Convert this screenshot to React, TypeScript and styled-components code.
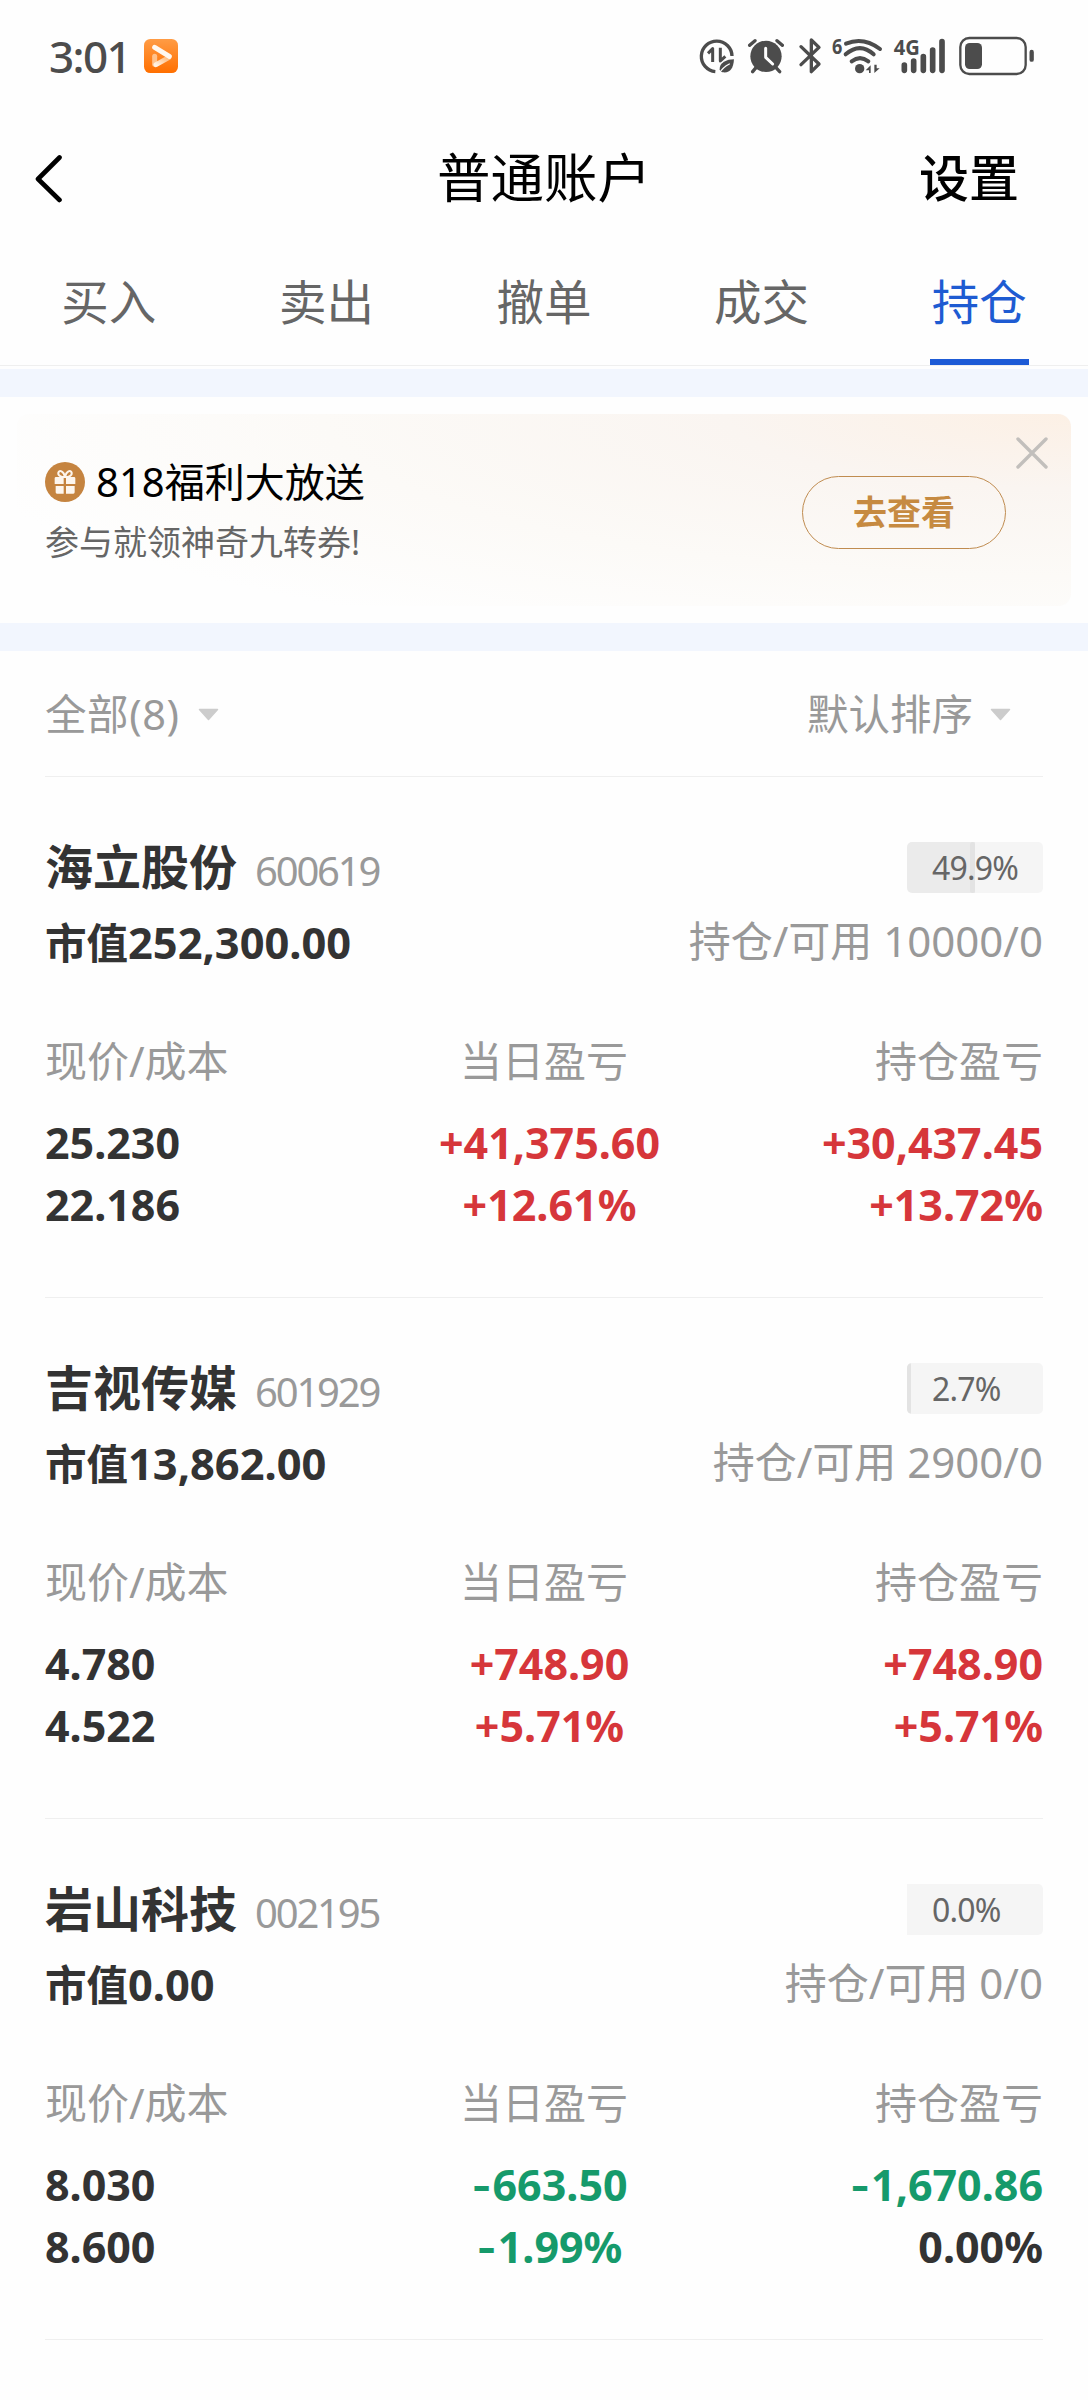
import React from 'react';
import styled, { createGlobalStyle } from 'styled-components';

const GlobalStyle = createGlobalStyle`
  * { box-sizing: border-box; }
  body {
    margin: 0;
    background: #fefefe;
    font-family: "Noto Sans", "Noto Sans CJK SC", sans-serif;
    color: #333;
  }
`;

const Screen = styled.div`
  width: 1088px;
  height: 2400px;
  overflow: hidden;
  background: #fefefe;
`;

/* ---------- status bar ---------- */

const StatusBar = styled.div`
  display: flex;
  align-items: center;
  height: 112px;
  padding: 0 53px 0 49px;
`;

const Clock = styled.span`
  width: 95px;
  font-size: 44px;
  line-height: 60px;
  font-weight: 500;
  letter-spacing: -1.6px;
  color: #4c4c4c;
  white-space: nowrap;
`;

const StatusIcons = styled.div`
  display: flex;
  margin-left: auto;
  color: #4c4c4c;
`;

const StatusGlyph = styled.svg`
  display: block;
  height: 40px;
  overflow: visible;
`;

/* ---------- header ---------- */

const Header = styled.header`
  display: grid;
  grid-template-columns: 1fr auto 1fr;
  align-items: center;
  height: 130px;
  padding: 1px 69px 0 33px;
  color: #000;
`;

const BackIcon = styled.svg`
  display: block;
  width: 32px;
  height: 50px;
`;

const Title = styled.h1`
  margin: 0 0 0 36px;
  font-size: 53.5px;
  line-height: 80px;
  font-weight: 400;
`;

const Settings = styled.span`
  justify-self: end;
  font-size: 50px;
  line-height: 80px;
  font-weight: 500;
`;

const Tabs = styled.nav`
  display: flex;
  height: 124px;
  border-bottom: 1px solid #efefef;
`;

const Tab = styled.div<{ $active?: boolean }>`
  flex: 1;
  display: flex;
  flex-direction: column;
  align-items: center;
  justify-content: space-between;
  padding-top: 25px;
  font-size: 47.5px;
  line-height: 70px;
  color: ${(p) => (p.$active ? '#1e5bd2' : '#666')};

  &::after {
    content: '';
    width: 99px;
    height: 6px;
    background: ${(p) => (p.$active ? '#1e5bd6' : 'transparent')};
  }
`;

const Band = styled.div<{ $top?: number }>`
  height: 28px;
  margin-top: ${(p) => p.$top ?? 0}px;
  background: #f2f6fe;
`;

/* ---------- promotion ---------- */

const Promo = styled.section`
  position: relative;
  display: flex;
  align-items: center;
  justify-content: space-between;
  height: 192px;
  margin: 17px;
  padding: 4px 65px 0 28px;
  border-radius: 13px;
  background:
    radial-gradient(ellipse 1150px 250px at 100% 0%, #fcf0e5 0%, #faf5f1 30%, #fcfaf7 65%, rgba(254, 254, 254, 0) 100%),
    #fefefe;
`;

const PromoText = styled.div`
  display: flex;
  flex-direction: column;
`;

const PromoTitle = styled.div`
  display: flex;
  align-items: center;
  gap: 11px;
  font-size: 40px;
  line-height: 60px;
  color: #000;
`;

const PromoSub = styled.div`
  font-size: 34px;
  line-height: 60px;
  color: #666;
`;

const PromoButton = styled.div`
  width: 204px;
  height: 73px;
  border: 1px solid #c08c50;
  border-radius: 37px;
  text-align: center;
  font-size: 34px;
  line-height: 71px;
  font-weight: 700;
  color: #c68a41;
`;

const CloseIcon = styled.svg`
  position: absolute;
  top: 21px;
  right: 21px;
  width: 36px;
  height: 36px;
`;

/* ---------- holdings ---------- */

const List = styled.main`
  padding: 0 45px;
`;

const Filters = styled.div`
  display: flex;
  justify-content: space-between;
  height: 126px;
  padding: 28px 32px 0 0;
  border-bottom: 1px solid #efefef;
`;

const Filter = styled.div<{ $gap: number; $spacing?: number }>`
  display: flex;
  align-items: center;
  gap: ${(p) => p.$gap}px;
  height: 70px;
  font-size: 41.5px;
  line-height: 70px;
  letter-spacing: ${(p) => p.$spacing ?? 0}px;
  color: #999;
`;

const Caret = styled.svg`
  width: 21px;
  height: 13px;
`;

const Card = styled.article`
  height: 521px;
  padding-top: 54px;
  border-bottom: 1px solid #efefef;
`;

const Line = styled.div<{ $h: number }>`
  display: flex;
  align-items: center;
  justify-content: space-between;
  height: ${(p) => p.$h}px;
  line-height: ${(p) => p.$h}px;
`;

const NameGroup = styled.div`
  display: flex;
  align-items: center;
  gap: 18px;
`;

const Name = styled.span`
  font-size: 48px;
  font-weight: 700;
`;

const Code = styled.span`
  margin-top: 8px;
  font-size: 40px;
  letter-spacing: -2.2px;
  color: #999;
`;

const Share = styled.div<{ $fill: number }>`
  position: relative;
  width: 136px;
  height: 51px;
  padding-left: 25px;
  border-radius: ${(p) => (p.$fill > 0 ? '5px' : '0 5px 5px 0')};
  overflow: hidden;
  background: linear-gradient(to right, #ebebeb ${(p) => p.$fill}px, #f5f5f5 ${(p) => p.$fill}px);
  font-size: 32px;
  line-height: 52px;
  letter-spacing: -0.8px;
  color: #666;
`;

const ShareEdge = styled.i<{ $at: number }>`
  position: absolute;
  top: 0;
  left: ${(p) => Math.max(0, p.$at - 5)}px;
  width: ${(p) => Math.min(5, p.$at)}px;
  height: 51px;
  border-radius: 3px;
  background: #e3e3e3;
`;

const ShareText = styled.span`
  position: relative;
`;

const MarketValue = styled.div`
  display: flex;
  font-size: 41.5px;
  font-weight: 700;
`;

const Amount = styled.span`
  font-size: 43.4px;
`;

const Quantity = styled.div`
  margin-bottom: 4px;
  font-size: 42px;
  color: #999;
`;

const Stats = styled.div`
  display: grid;
  grid-template-columns: 1fr 1fr 1fr;
  margin-top: 48px;
`;

const Stat = styled.div<{ $align: string; $shift?: number }>`
  text-align: ${(p) => p.$align};
  > p { padding-left: ${(p) => p.$shift ?? 0}px; }
`;

const Label = styled.div`
  height: 81px;
  font-size: 42px;
  line-height: 60px;
  color: #999;
`;

const Value = styled.p<{ $tone: Tone }>`
  margin: 0;
  font-size: 43px;
  line-height: 62px;
  font-weight: 700;
  color: ${(p) => ({ up: '#d6363a', down: '#169a6b', flat: '#333' })[p.$tone]};
`;

const Minus = styled.span`
  font-family: Inter, "Noto Sans", sans-serif;
  font-feature-settings: "calt" 0;
  letter-spacing: 1px;
  line-height: 1;
`;

type Tone = 'up' | 'down' | 'flat';

interface Holding {
  name: string;
  code: string;
  share: string;
  fill: number;
  market: string;
  quantity: string;
  prices: [string, string];
  today: [string, string];
  todayTone: Tone;
  total: [string, string];
  totalTones: [Tone, Tone];
}

const holdings: Holding[] = [
  {
    name: '海立股份', code: '600619', share: '49.9%', fill: 68,
    market: '252,300.00', quantity: '10000/0', prices: ['25.230', '22.186'],
    today: ['+41,375.60', '+12.61%'], todayTone: 'up',
    total: ['+30,437.45', '+13.72%'], totalTones: ['up', 'up'],
  },
  {
    name: '吉视传媒', code: '601929', share: '2.7%', fill: 4,
    market: '13,862.00', quantity: '2900/0', prices: ['4.780', '4.522'],
    today: ['+748.90', '+5.71%'], todayTone: 'up',
    total: ['+748.90', '+5.71%'], totalTones: ['up', 'up'],
  },
  {
    name: '岩山科技', code: '002195', share: '0.0%', fill: 0,
    market: '0.00', quantity: '0/0', prices: ['8.030', '8.600'],
    today: ['-663.50', '-1.99%'], todayTone: 'down',
    total: ['-1,670.86', '0.00%'], totalTones: ['down', 'flat'],
  },
];

const tabs = ['买入', '卖出', '撤单', '成交', '持仓'];

function AppBadge() {
  return (
    <svg width="34" height="34" viewBox="0 0 102 102">
      <defs>
        <linearGradient id="badge" x1="0" y1="0" x2="0" y2="1">
          <stop offset="0" stopColor="#ff9c45" />
          <stop offset="1" stopColor="#ff6f00" />
        </linearGradient>
        <linearGradient id="fold" x1="0" y1="1" x2="1" y2="0">
          <stop offset="0" stopColor="#fff2e4" />
          <stop offset="1" stopColor="#ffb877" />
        </linearGradient>
      </defs>
      <rect width="102" height="102" rx="19" fill="url(#badge)" />
      <path d="M32 52v24" stroke="#ffc28c" strokeWidth="15" strokeLinecap="round" />
      <path d="M36 77L74 56" stroke="url(#fold)" strokeWidth="15" strokeLinecap="round" />
      <path d="M32 25L76 52" stroke="#fff8f0" strokeWidth="15" strokeLinecap="round" />
    </svg>
  );
}

function StatusIconRow() {
  const stroke = { fill: 'none', stroke: 'currentColor', strokeLinecap: 'round' as const, strokeLinejoin: 'round' as const };
  return (
    <StatusIcons>
      <StatusGlyph viewBox="54 48 130 120">
        <path d="M106 155A46 46 0 1 1 156 108" {...stroke} strokeWidth="10" strokeLinecap="butt" />
        <path d="M84 100L98 86V126" {...stroke} strokeWidth="9" strokeLinecap="butt" />
        <path d="M121 83V123L136 109" {...stroke} strokeWidth="9" strokeLinecap="butt" />
        <path d="M162 118C140 118 118 128 119 148C120 154 124 156 128 157C150 160 160 146 162 118Z" fill="currentColor" />
        <path d="M118 160C126 146 136 138 148 132" {...stroke} stroke="#fefefe" strokeWidth="4" />
      </StatusGlyph>
      <StatusGlyph viewBox="184 48 152 120">
        <circle cx="259" cy="109" r="47" fill="currentColor" />
        <path d="M210 76L226 62M308 76L292 62" {...stroke} strokeWidth="10" />
        <path d="M229 143L219 155M289 143L300 155" {...stroke} strokeWidth="10" />
        <path d="M258 85V112L279 132" {...stroke} stroke="#fefefe" strokeWidth="9" />
      </StatusGlyph>
      <StatusGlyph viewBox="336 48 105 120">
        <path d="M363 80L417 132L394 155V60L417 82L363 134" {...stroke} strokeWidth="10" />
      </StatusGlyph>
      <StatusGlyph viewBox="441 48 183 120">
        <text x="456" y="101" fontSize="65" fontWeight="700" fill="currentColor" fontFamily="Open Sans, sans-serif" textLength="31" lengthAdjust="spacingAndGlyphs">6</text>
        <path d="M498 71Q550 49 600 87" {...stroke} strokeWidth="12" />
        <path d="M497 103Q540 66 581 103" {...stroke} strokeWidth="12" />
        <path d="M515 124Q540 105 565 124" {...stroke} strokeWidth="12" />
        <circle cx="539" cy="146" r="14" fill="currentColor" />
        <path d="M572 136V159H567V151H557ZM583 134V159L599 145H590V134Z" fill="currentColor" />
      </StatusGlyph>
      <StatusGlyph viewBox="624 48 192 120">
        <text x="641" y="105" fontSize="66" fontWeight="700" fill="currentColor" fontFamily="Open Sans, sans-serif" textLength="78" lengthAdjust="spacingAndGlyphs">4G</text>
        <path d="M673 135V151M701 123V151M730 110V151M758 90V151M786 65V151" {...stroke} strokeWidth="17" />
      </StatusGlyph>
      <StatusGlyph viewBox="816 48 249 120">
        <rect x="841" y="54" width="196" height="108" rx="27" {...stroke} strokeWidth="7" />
        <rect x="855" y="69" width="51" height="78" rx="14" fill="currentColor" />
        <path d="M1055 96V119" {...stroke} strokeWidth="13" />
      </StatusGlyph>
    </StatusIcons>
  );
}

function GiftIcon() {
  return (
    <svg width="40" height="40" viewBox="0 0 120 120">
      <circle cx="60" cy="60" r="60" fill="#c58440" />
      <path d="M60 45C50 46 38 41 40 32C43 23 56 27 60 45C64 27 77 23 80 32C82 41 70 46 60 45Z" fill="none" stroke="#fdf6ee" strokeWidth="6" />
      <path d="M29 49a4 4 0 0 1 4-4H56V66H29ZM63 45H87a4 4 0 0 1 4 4V66H63ZM32 72H56V95H36a4 4 0 0 1-4-4ZM63 72H89V91a4 4 0 0 1-4 4H63Z" fill="#fdf6ee" />
    </svg>
  );
}

function CaretDown() {
  return (
    <Caret viewBox="0 0 21 13">
      <path d="M1.5 1.5H19.5L10.5 11.5Z" fill="#ccc" stroke="#ccc" strokeWidth="1.5" strokeLinejoin="round" />
    </Caret>
  );
}

function Figure({ text, tone }: { text: string; tone: Tone }) {
  const negative = text.startsWith('-');
  return (
    <Value $tone={tone}>
      {negative && <Minus>-</Minus>}
      {negative ? text.slice(1) : text}
    </Value>
  );
}

function HoldingCard({ h }: { h: Holding }) {
  return (
    <Card>
      <Line $h={72}>
        <NameGroup>
          <Name>{h.name}</Name>
          <Code>{h.code}</Code>
        </NameGroup>
        <Share $fill={h.fill}>
          <ShareEdge $at={h.fill} />
          <ShareText>{h.share}</ShareText>
        </Share>
      </Line>
      <Line $h={80}>
        <MarketValue>市值<Amount>{h.market}</Amount></MarketValue>
        <Quantity>持仓/可用 {h.quantity}</Quantity>
      </Line>
      <Stats>
        <Stat $align="left">
          <Label>现价/成本</Label>
          {h.prices.map((v) => <Figure key={v} text={v} tone="flat" />)}
        </Stat>
        <Stat $align="center" $shift={11}>
          <Label>当日盈亏</Label>
          {h.today.map((v) => <Figure key={v} text={v} tone={h.todayTone} />)}
        </Stat>
        <Stat $align="right">
          <Label>持仓盈亏</Label>
          {h.total.map((v, i) => <Figure key={v} text={v} tone={h.totalTones[i]} />)}
        </Stat>
      </Stats>
    </Card>
  );
}

export default function App() {
  return (
    <Screen>
      <GlobalStyle />
      <StatusBar>
        <Clock>3:01</Clock>
        <AppBadge />
        <StatusIconRow />
      </StatusBar>
      <Header>
        <BackIcon viewBox="0 0 32 50">
          <path d="M26.500 4.500L5 26L26.500 47" fill="none" stroke="#000" strokeWidth="4.600" strokeLinecap="round" strokeLinejoin="round" />
        </BackIcon>
        <Title>普通账户</Title>
        <Settings>设置</Settings>
      </Header>
      <Tabs>
        {tabs.map((t) => <Tab key={t} $active={t === '持仓'}>{t}</Tab>)}
      </Tabs>
      <Band $top={3} />
      <Promo>
        <PromoText>
          <PromoTitle><GiftIcon />818福利大放送</PromoTitle>
          <PromoSub>参与就领神奇九转券!</PromoSub>
        </PromoText>
        <PromoButton>去查看</PromoButton>
        <CloseIcon viewBox="0 0 36 36">
          <path d="M4 4L32 32M32 4L4 32" stroke="#c2bfbc" strokeWidth="3.400" strokeLinecap="round" />
        </CloseIcon>
      </Promo>
      <Band />
      <List>
        <Filters>
          <Filter $gap={18} $spacing={0.6}>全部(8)<CaretDown /></Filter>
          <Filter $gap={17}>默认排序<CaretDown /></Filter>
        </Filters>
        {holdings.map((h) => <HoldingCard key={h.code} h={h} />)}
      </List>
    </Screen>
  );
}
